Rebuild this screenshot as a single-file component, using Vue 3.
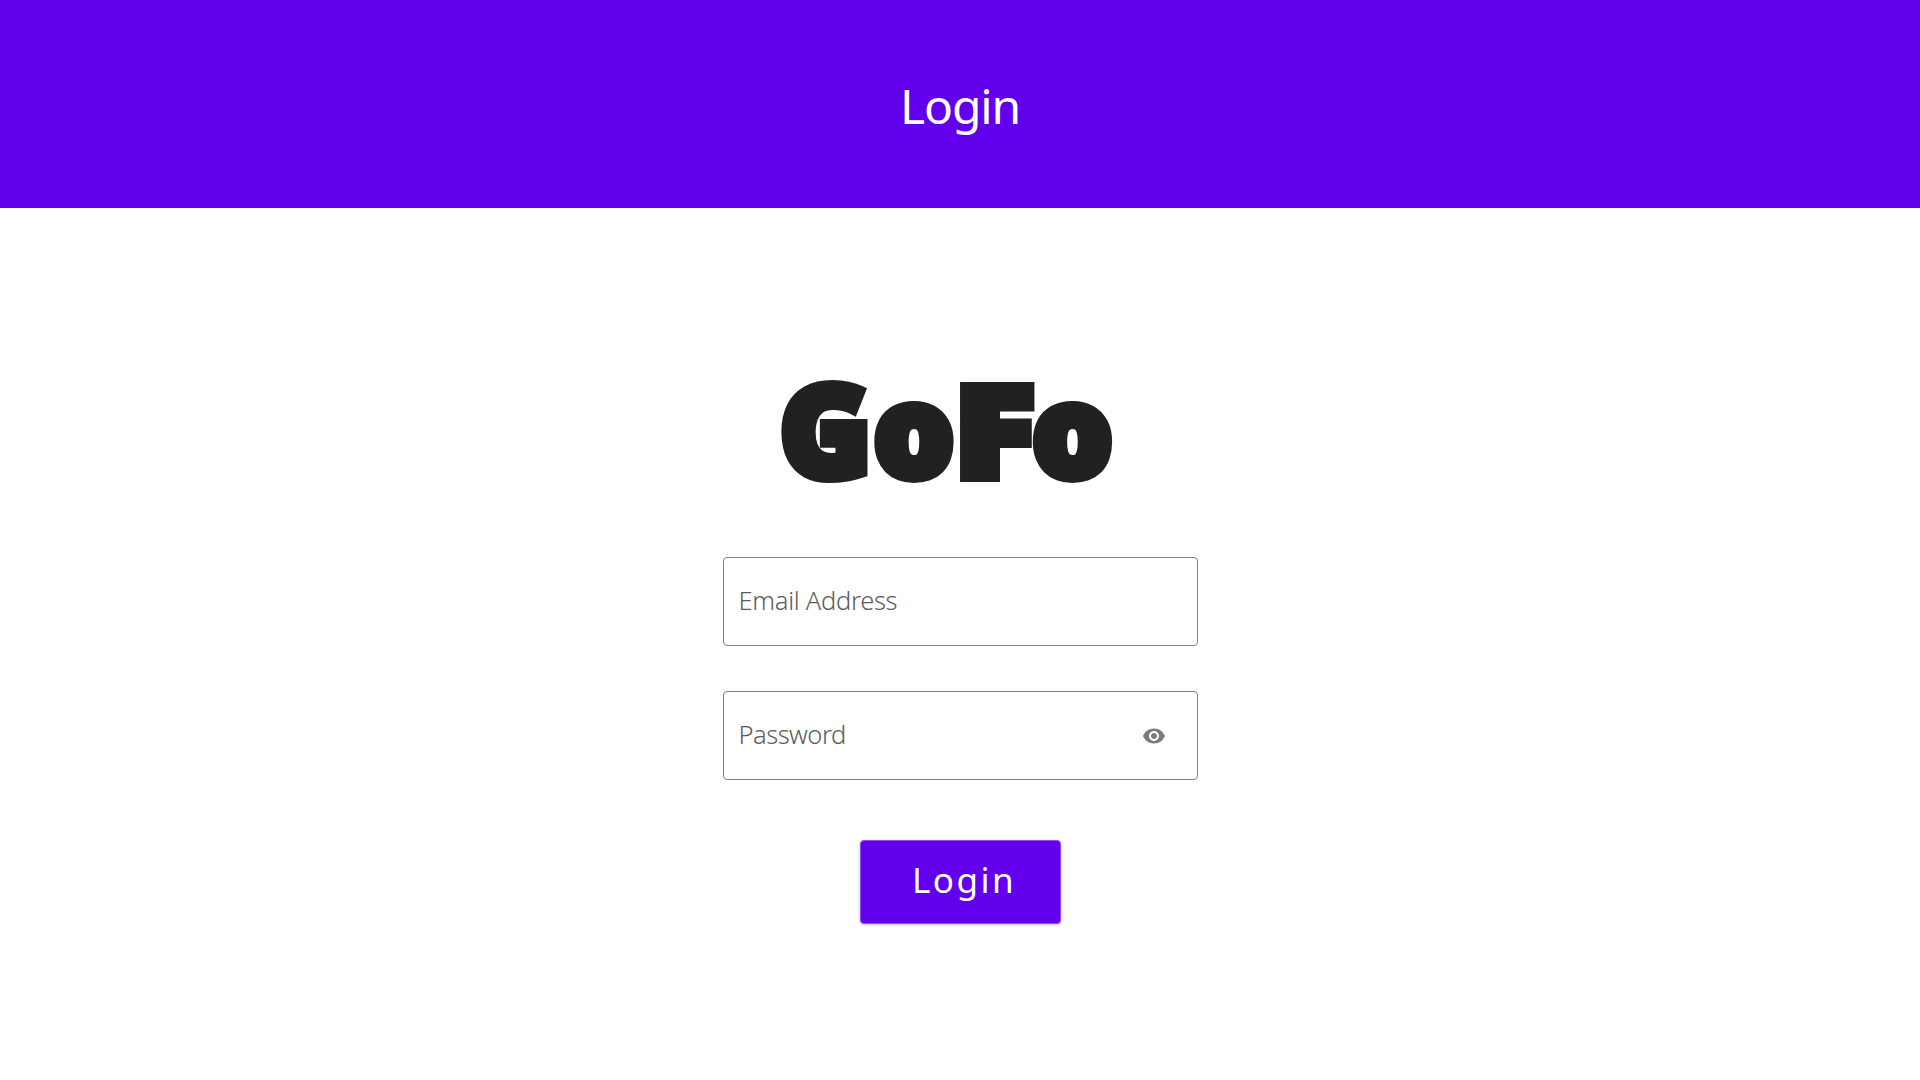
<script setup>
import { ref } from 'vue'

const email = ref('')
const password = ref('')
const passwordVisible = ref(false)
</script>

<template>
  <div class="page">
    <header class="app-bar">
      <h1 class="title">Login</h1>
    </header>
    <main class="content">
      <svg class="logo" width="360" height="220" viewBox="-10 -50 360 220" role="img" aria-label="GoFo">
        <text class="glyph" x="-1" y="104" textLength="91" lengthAdjust="spacingAndGlyphs">G</text>
        <text class="glyph" x="93" y="104" textLength="80" lengthAdjust="spacingAndGlyphs">o</text>
        <text class="glyph" x="173.500" y="104" textLength="80" lengthAdjust="spacingAndGlyphs">F</text>
        <text class="glyph" x="251.500" y="104" textLength="80" lengthAdjust="spacingAndGlyphs">o</text>
      </svg>
      <form class="form" @submit.prevent>
        <label class="field">
          <input v-model="email" class="input email" type="text" placeholder="Email Address" />
        </label>
        <label class="field">
          <input v-model="password" class="input password" :type="passwordVisible ? 'text' : 'password'" placeholder="Password" />
          <svg class="eye" width="24" height="24" viewBox="0 0 24 24" @click="passwordVisible = !passwordVisible">
            <path d="M12 4.5C7 4.5 2.73 7.61 1 12c1.73 4.39 6 7.5 11 7.5s9.27-3.11 11-7.5c-1.73-4.39-6-7.5-11-7.5zM12 17c-2.76 0-5-2.24-5-5s2.24-5 5-5 5 2.24 5 5-2.24 5-5 5zm0-8c-1.66 0-3 1.34-3 3s1.34 3 3 3 3-1.34 3-3-1.34-3-3-3z" />
          </svg>
        </label>
        <button class="submit" type="submit"><span class="submit-label">Login</span></button>
      </form>
    </main>
  </div>
</template>

<style>
body {
  background: #fff;
}
</style>

<style scoped>
.page {
  height: 1080px;
  overflow: hidden;
  font-family: "Noto Sans", "Open Sans", sans-serif;
}
.app-bar {
  height: 208px;
  display: flex;
  justify-content: center;
  background: #6200ee;
}
.title {
  margin: 72px 0 0;
  color: #fff;
  font-size: 48px;
  line-height: 68px;
  font-weight: 400;
  letter-spacing: -1.2px;
}
.content {
  display: flex;
  flex-direction: column;
  align-items: center;
  padding-top: 115px;
}
.logo {
  display: block;
  margin: 0 18px -50px 0;
}
.glyph {
  font-family: "Noto Sans", "Open Sans", sans-serif;
  font-size: 126px;
  font-weight: 900;
  fill: #212121;
  stroke: #212121;
  stroke-width: 10px;
}
.form {
  display: flex;
  flex-direction: column;
  align-items: center;
  padding-top: 64px;
}
.field {
  box-sizing: border-box;
  width: 475px;
  height: 89px;
  margin-bottom: 45px;
  padding: 0 31px 0 15px;
  display: flex;
  align-items: center;
  border: 1px solid #808080;
  border-radius: 4px;
}
.input {
  flex: 1;
  min-width: 0;
  height: 40px;
  margin: 0 0 4px;
  padding: 0;
  border: 0;
  outline: 0;
  background: transparent;
  color: #212121;
  font-family: inherit;
  font-size: 25.5px;
  font-weight: 300;
}
.input::placeholder {
  color: #5c5c5c;
  opacity: 1;
}
.email {
  letter-spacing: -0.3px;
}
.password {
  letter-spacing: -0.5px;
}
.eye {
  margin-top: 1px;
  fill: #7b7b7b;
  cursor: pointer;
}
.submit {
  width: 201px;
  height: 84px;
  margin: 15px 0 0;
  padding: 0;
  border: 1px solid #8e4cf2;
  border-radius: 4px;
  background: #6200ee;
  box-shadow: 0 1px 3px rgba(0, 0, 0, 0.25);
  color: #fff;
  font-family: inherit;
  font-size: 35px;
  line-height: 48px;
}
.submit-label {
  display: block;
  margin: -5px 0 0 8px;
  letter-spacing: 2.5px;
}
</style>
